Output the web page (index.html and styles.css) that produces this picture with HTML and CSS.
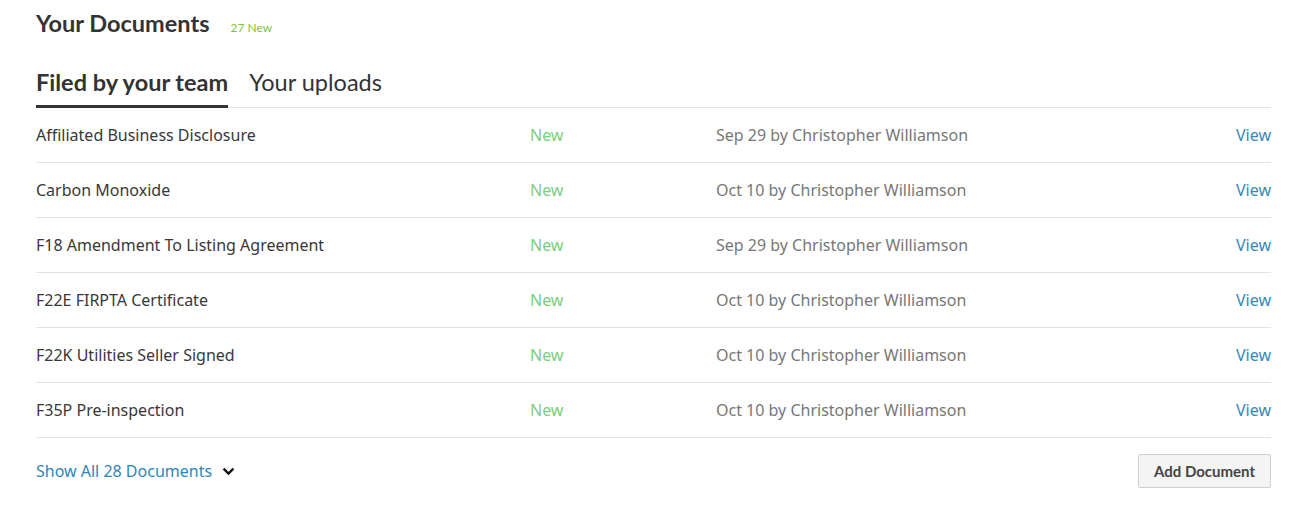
FILE: index.html
```html
<!DOCTYPE html>
<html lang="en">
<head>
<meta charset="utf-8">
<title>Your Documents</title>
<link rel="stylesheet" href="styles.css">
</head>
<body>
<section class="docs">
  <header class="docs-head">
    <h2 class="docs-title">Your Documents</h2>
    <span class="docs-new">27 New</span>
  </header>
  <nav class="tabs">
    <a class="tab tab-active">Filed by your team</a>
    <a class="tab">Your uploads</a>
  </nav>
  <ul class="doc-list">
    <li class="doc-row"><span class="doc-name">Affiliated Business Disclosure</span><span class="doc-status">New</span><span class="doc-meta">Sep 29 by Christopher Williamson</span><a class="doc-view">View</a></li>
    <li class="doc-row"><span class="doc-name">Carbon Monoxide</span><span class="doc-status">New</span><span class="doc-meta">Oct 10 by Christopher Williamson</span><a class="doc-view">View</a></li>
    <li class="doc-row"><span class="doc-name">F18 Amendment To Listing Agreement</span><span class="doc-status">New</span><span class="doc-meta">Sep 29 by Christopher Williamson</span><a class="doc-view">View</a></li>
    <li class="doc-row"><span class="doc-name">F22E FIRPTA Certificate</span><span class="doc-status">New</span><span class="doc-meta">Oct 10 by Christopher Williamson</span><a class="doc-view">View</a></li>
    <li class="doc-row"><span class="doc-name">F22K Utilities Seller Signed</span><span class="doc-status">New</span><span class="doc-meta">Oct 10 by Christopher Williamson</span><a class="doc-view">View</a></li>
    <li class="doc-row"><span class="doc-name">F35P Pre-inspection</span><span class="doc-status">New</span><span class="doc-meta">Oct 10 by Christopher Williamson</span><a class="doc-view">View</a></li>
  </ul>
  <footer class="docs-foot">
    <a class="show-all">Show All 28 Documents
      <svg class="chev" width="13" height="9" viewBox="0 0 13 9"><path d="M1.6 1.6 L6.5 6.5 L11.4 1.6" fill="none" stroke="#111" stroke-width="2.4"/></svg>
    </a>
    <button class="add-btn">Add Document</button>
  </footer>
</section>
</body>
</html>
```
FILE: styles.css
```css
* { box-sizing: border-box; }
body {
  margin: 0;
  background: #fff;
  font-family: "Noto Sans", sans-serif;
  color: #333;
}
.docs {
  padding: 8px 26px 0 36px;
}
.docs-head {
  display: flex;
  align-items: baseline;
  gap: 21px;
  height: 32px;
}
.docs-title {
  margin: 0;
  font-family: Lato, sans-serif;
  font-weight: 700;
  font-size: 23.5px;
  color: #333;
  line-height: 30px;
}
.docs-new {
  font-family: Lato, sans-serif;
  font-size: 12px;
  color: #7dc342;
}
.tabs {
  display: flex;
  gap: 21px;
  margin-top: 27px;
  border-bottom: 1px solid #e3e3e3;
}
.tab {
  font-family: Lato, sans-serif;
  font-size: 23.5px;
  line-height: 30px;
  padding-bottom: 8px;
  color: #333;
  border-bottom: 3px solid transparent;
  margin-bottom: -1px;
}
.tab-active {
  font-weight: 700;
  border-bottom-color: #333;
}
.doc-list {
  list-style: none;
  margin: 0;
  padding: 0;
}
.doc-row {
  display: grid;
  grid-template-columns: 494px 186px 1fr auto;
  align-items: center;
  height: 55px;
  padding-bottom: 1px;
  border-bottom: 1px solid #e3e3e3;
  font-size: 16px;
}
.doc-name { color: #383838; }
.doc-status { color: #7ccd7c; }
.doc-meta { color: #777; }
.doc-view { color: #3489b9; }
.docs-foot {
  display: flex;
  justify-content: space-between;
  align-items: center;
  padding-top: 16px;
}
.show-all {
  display: flex;
  align-items: center;
  gap: 10px;
  font-size: 16px;
  color: #2f86b8;
}
.add-btn {
  font-family: Lato, sans-serif;
  font-weight: 700;
  font-size: 15px;
  color: #444;
  background: #f4f4f4;
  border: 1px solid #cfcfcf;
  border-radius: 2px;
  width: 133px;
  height: 34px;
  padding: 0;
}
```
